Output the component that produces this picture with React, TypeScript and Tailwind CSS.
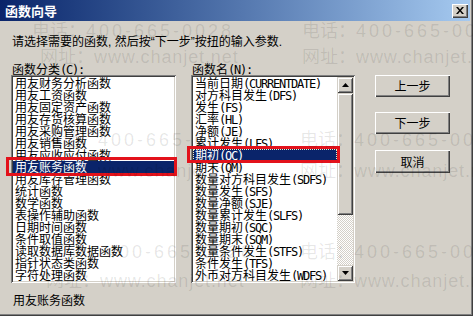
import React from "react";

const leftItems = [
  "用友财务分析函数",
  "用友工资函数",
  "用友固定资产函数",
  "用友存货核算函数",
  "用友采购管理函数",
  "用友销售函数",
  "用友应收应付函数",
  "用友账务函数",
  "用友库存管理函数",
  "统计函数",
  "数学函数",
  "表操作辅助函数",
  "日期时间函数",
  "条件取值函数",
  "读取数据库数据函数",
  "指针状态类函数",
  "字符处理函数",
];

const rightItems: [string, string][] = [
  ["当前日期", "(CURRENTDATE)"],
  ["对方科目发生", "(DFS)"],
  ["发生", "(FS)"],
  ["汇率", "(HL)"],
  ["净额", "(JE)"],
  ["累计发生", "(LFS)"],
  ["期初", "(QC)"],
  ["期末", "(QM)"],
  ["数量对方科目发生", "(SDFS)"],
  ["数量发生", "(SFS)"],
  ["数量净额", "(SJE)"],
  ["数量累计发生", "(SLFS)"],
  ["数量期初", "(SQC)"],
  ["数量期末", "(SQM)"],
  ["数量条件发生", "(STFS)"],
  ["条件发生", "(TFS)"],
  ["外币对方科目发生", "(WDFS)"],
  ["外币发生", "(WFS)"],
  ["外币净额", "(WJE)"],
];

function Mono({ children }: { children: React.ReactNode }) {
  return (
    <span className="font-['DejaVu_Sans_Mono',monospace] text-[12px] tracking-[-1.22px]">
      {children}
    </span>
  );
}

const raised =
  "shadow-[inset_1px_1px_#d4d0c8,inset_-1px_-1px_#404040,inset_2px_2px_#ffffff,inset_-2px_-2px_#808080] bg-[#d4d0c8]";
const sunken =
  "shadow-[inset_1px_1px_#808080,inset_-1px_-1px_#ffffff,inset_2px_2px_#404040,inset_-2px_-2px_#d4d0c8] bg-white p-[2px]";
const pushBtn =
  "w-[75px] flex items-center justify-center bg-[#d4d0c8] shadow-[inset_1px_1px_#ffffff,inset_-1px_-1px_#404040,inset_-2px_-2px_#808080] leading-[14px]";

function Arrow({ down }: { down?: boolean }) {
  return (
    <svg width="7" height="4" viewBox="0 0 7 4">
      {down ? <polygon points="0,0 7,0 3.5,4" fill="#000" /> : <polygon points="0,4 7,4 3.5,0" fill="#000" />}
    </svg>
  );
}

function Watermark({ left, top, kind }: { left: number; top: number; kind: "phone" | "url" }) {
  return (
    <div
      className="absolute whitespace-nowrap text-[18px] leading-[18px] text-[rgba(0,0,0,0.1)] font-['Liberation_Sans','Noto_Sans_CJK_SC',sans-serif]"
      style={{ left, top }}
    >
      {kind === "phone" ? (
        <>
          电话：<span className="tracking-[3px]">400-665-0028</span>
        </>
      ) : (
        <>
          网址：<span className="tracking-[0.9px]">www.chanjet.net</span>
        </>
      )}
    </div>
  );
}

export default function App() {
  return (
    <div className="relative w-[473px] h-[316px] overflow-hidden bg-[#d4d0c8] text-[12px] text-black font-['Noto_Sans_CJK_SC',sans-serif] shadow-[inset_-1px_-1px_#404040,inset_-2px_-2px_#808080]">
      {/* Title bar */}
      <div className="w-[470px] h-[21px] bg-linear-to-r from-[#0a246a] to-[#a6caf0] flex items-center justify-between pl-[5px] pr-[2px]">
        <span className="text-white font-bold text-[13px] leading-[21px]">函数向导</span>
        <div className="w-[16px] h-[14px] flex items-center justify-center bg-[#d4d0c8] shadow-[inset_1px_1px_#ffffff,inset_-1px_-1px_#404040,inset_-2px_-2px_#808080]">
          <svg width="8" height="7" viewBox="0 0 8 7">
            <path d="M0 0 L2 0 L4 2.4 L6 0 L8 0 L5 3.5 L8 7 L6 7 L4 4.6 L2 7 L0 7 L3 3.5 Z" fill="#000" />
          </svg>
        </div>
      </div>

      {/* Instruction */}
      <div className="pl-[12px] mt-[13px] h-[14px] leading-[14px] whitespace-nowrap">
        请选择需要的函数<span className="font-['Liberation_Sans',sans-serif]">, </span>然后按
        <span className="font-['Liberation_Sans',sans-serif]">“</span>下一步
        <span className="font-['Liberation_Sans',sans-serif]">”</span>按扭的输入参数
        <span className="font-['Liberation_Sans',sans-serif]">.</span>
      </div>

      {/* Main row */}
      <div className="flex pl-[11px] mt-[14px]">
        <div className="w-[165px]">
          <div className="h-[13px] leading-[13px] pl-[1px] whitespace-nowrap">
            函数分类<Mono>(C):</Mono>
          </div>
          <div className={"h-[208px] " + sunken}>
            <div className="h-full overflow-hidden">
              {leftItems.map((t, i) => (
                <div
                  key={t}
                  className={
                    "h-[12px] leading-[12px] pl-[2px] whitespace-nowrap " +
                    (i === 7 ? "bg-[#0a246a] text-white" : "")
                  }
                >
                  {t}
                </div>
              ))}
            </div>
          </div>
        </div>

        <div className="w-[164px] ml-[15px]">
          <div className="h-[13px] leading-[13px] pl-[1px] whitespace-nowrap">
            函数名<Mono>(N):</Mono>
          </div>
          <div className={"h-[208px] flex " + sunken}>
            <div className="flex-1 h-full overflow-hidden">
              {rightItems.map(([c, l], i) => (
                <div
                  key={c}
                  className={
                    "h-[12px] leading-[12px] pl-[2px] whitespace-nowrap " +
                    (i === 6
                      ? "bg-[#0a246a] text-white outline-1 outline-dotted outline-[#f4f0c0] -outline-offset-1"
                      : "")
                  }
                >
                  {c}
                  <Mono>{l}</Mono>
                </div>
              ))}
            </div>
            <div className="w-[16px] h-full flex flex-col">
              <div className={"h-[16px] flex items-center justify-center " + raised}>
                <Arrow />
              </div>
              <div className={"h-[122px] " + raised} />
              <div className="flex-1 bg-[repeating-conic-gradient(#ffffff_0%_25%,#d4d0c8_0%_50%)] bg-[length:2px_2px]" />
              <div className={"h-[16px] flex items-center justify-center " + raised}>
                <Arrow down />
              </div>
            </div>
          </div>
        </div>

        <div className="ml-[20px] pt-[13px] flex flex-col">
          <div className={"h-[22px] " + pushBtn}>上一步</div>
          <div className={"h-[22px] mt-[15px] " + pushBtn}>下一步</div>
          <div className={"h-[23px] mt-[16px] " + pushBtn}>取消</div>
        </div>
      </div>

      {/* Bottom label */}
      <div className="pl-[13px] mt-[10px] leading-[14px]">用友账务函数</div>

      {/* Red highlight boxes */}
      <div className="absolute left-[6px] top-[157px] w-[171px] h-[19px] border-[3px] border-[#e3121b] pointer-events-none" />
      <div className="absolute left-[187px] top-[146px] w-[153px] h-[17px] border-[3px] border-[#e3121b] pointer-events-none" />

      {/* Watermark overlay */}
      <div className="absolute inset-0 pointer-events-none">
        <Watermark kind="phone" left={32} top={22} />
        <Watermark kind="phone" left={302} top={22} />
        <Watermark kind="url" left={40} top={48} />
        <Watermark kind="url" left={302} top={48} />
        <Watermark kind="phone" left={44} top={131} />
        <Watermark kind="phone" left={300} top={131} />
        <Watermark kind="url" left={44} top={162} />
        <Watermark kind="url" left={300} top={162} />
        <Watermark kind="phone" left={52} top={243} />
        <Watermark kind="phone" left={300} top={243} />
        <Watermark kind="url" left={46} top={272} />
        <Watermark kind="url" left={300} top={272} />
      </div>
    </div>
  );
}
